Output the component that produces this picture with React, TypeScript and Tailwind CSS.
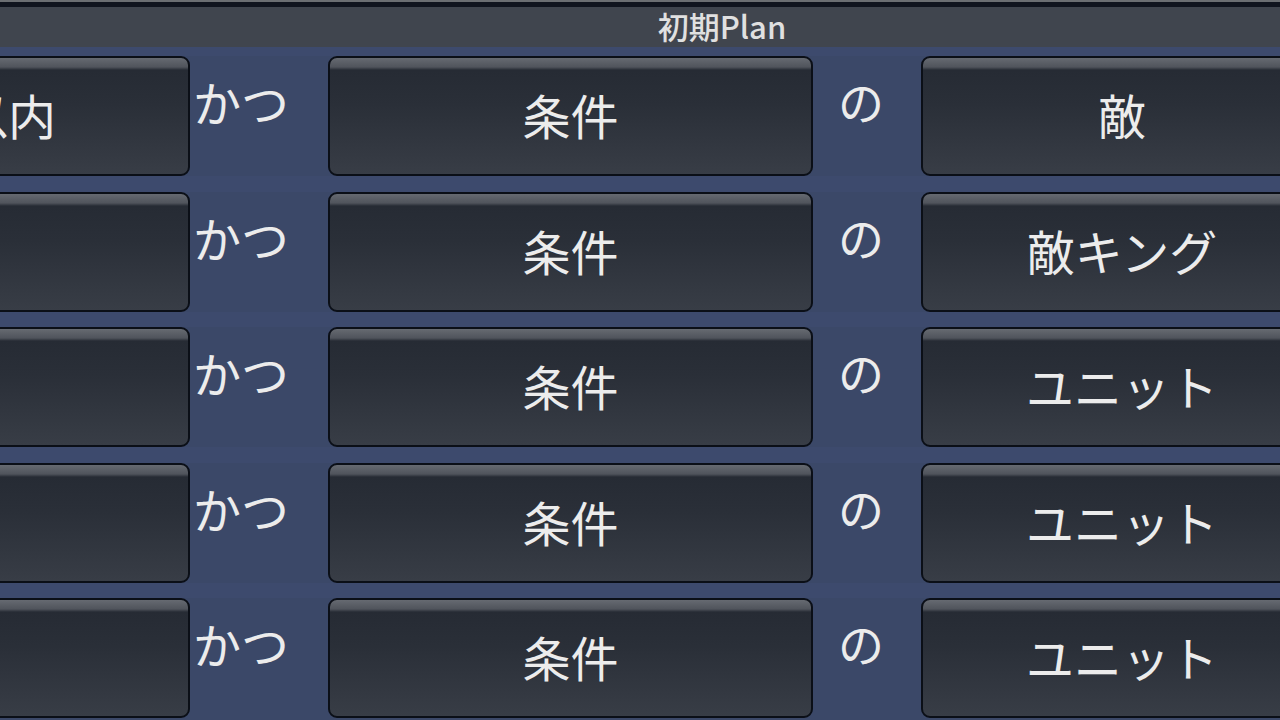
import React from 'react';

const rows = [
  { left: '射程以内', target: '敵' },
  { left: '', target: '敵キング' },
  { left: '', target: 'ユニット' },
  { left: '', target: 'ユニット' },
  { left: '', target: 'ユニット' },
];

const btn =
  'shrink-0 flex items-center pb-[4px] border-2 border-[#0b0f17] rounded-[9px] bg-[linear-gradient(to_bottom,#666a71_0px,#50545c_9px,#262b34_12px,#2a2f38_40%,#383d46_100%)] text-[#ececec] text-[48px] leading-none';

const App: React.FC = () => {
  return (
    <div
      className="w-[1280px] h-[720px] overflow-hidden bg-[#3b4868] flex flex-col"
      style={{ fontFamily: '"Noto Sans CJK JP", "Noto Sans", sans-serif' }}
    >
      {/* Top edge */}
      <div className="h-[2px] bg-[#6b6e72] shrink-0" />
      <div className="h-[5px] bg-[#10141e] shrink-0" />

      {/* Title bar */}
      <div className="h-[40px] shrink-0 bg-[#40454e] flex items-center justify-center pl-[164px] pb-[3px] text-[31px] font-medium leading-none text-[#e0e0e0]">
        初期Plan
      </div>

      {/* Condition rows */}
      <div className="flex flex-col gap-[15.5px] pt-[9px] bg-[#3d4a6d]">
        {rows.map((row, i) => (
          <div key={i} className="flex h-[120px] bg-[#3b4868]">
            <div className={`${btn} w-[485px] ml-[-295px] justify-end pr-[132px]`}>{row.left}</div>
            <div className="w-[138px] shrink-0 pt-[21px] pl-[3px] text-[48px] leading-none text-[#ececec]">かつ</div>
            <div className={`${btn} w-[485px] justify-center`}>条件</div>
            <div className="w-[108px] shrink-0 pt-[21px] pr-[12px] text-center text-[46px] leading-none text-[#ececec]">の</div>
            <div className={`${btn} w-[402px] justify-center`}>{row.target}</div>
          </div>
        ))}
      </div>
    </div>
  );
};

export default App;
